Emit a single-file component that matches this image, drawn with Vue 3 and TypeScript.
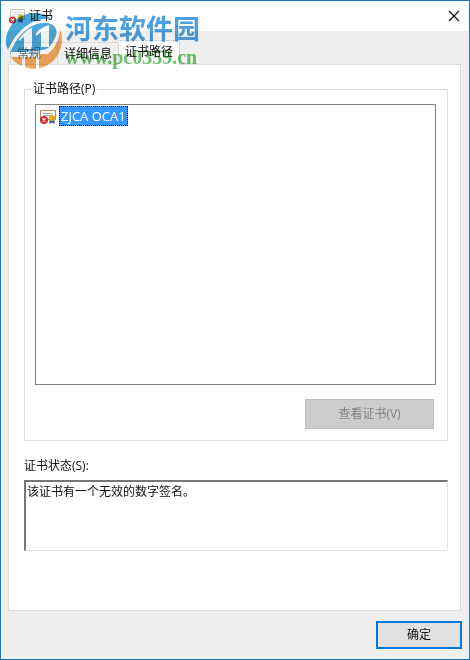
<script setup lang="ts">
import { ref } from 'vue'

const tabs: string[] = ['常规', '详细信息', '证书路径']
const active = ref(2)
const status = ref('该证书有一个无效的数字签名。')
</script>

<template>
  <main class="window">
    <header class="titlebar">
      <svg class="cert" viewBox="0 0 16 16" aria-hidden="true">
        <path d="M1.500 1.500h14v10h-14z" fill="#f7f5ee" stroke="#c9c5ba" />
        <path d="M4 4.500h9M4 6.500h9" stroke="#dcdcdc" />
        <path d="M9.500 10v5l2-1.500 2 1.500v-5" fill="#3c5a78" />
        <circle cx="11.500" cy="9" r="2.500" fill="#d9a520" />
        <circle cx="3.500" cy="12" r="3.500" fill="#c72b36" />
        <path d="m2 10.500 3 3m0-3-3 3" stroke="#fff" stroke-width="1.200" />
      </svg>
      <h1>证书</h1>
      <button class="close" type="button" aria-label="关闭">
        <svg viewBox="0 0 12 12"><path d="m1 1 10 10M11 1 1 11" stroke="#111" stroke-width="1.200" /></svg>
      </button>
    </header>

    <nav class="tabs" role="tablist">
      <button
        v-for="(tab, i) in tabs"
        :key="tab"
        type="button"
        role="tab"
        class="tab"
        :class="{ selected: active === i }"
        :aria-selected="active === i"
        @click="active = i"
      >{{ tab }}</button>
    </nav>

    <section class="panel">
      <fieldset class="group">
        <legend>证书路径(P)</legend>
        <ul class="tree">
          <li>
            <svg class="cert" viewBox="0 0 16 16" aria-hidden="true">
              <path d="M.5 2.500h15v9H.5z" fill="#fffdf2" stroke="#b08b62" />
              <path d="M3 5.500h10M3 7.500h10" stroke="#b4b4b4" />
              <path d="M9.500 11v5l2.500-1.500 2.500 1.500v-5" fill="#315d94" />
              <circle cx="12" cy="10" r="3" fill="#e9a817" />
              <circle cx="4" cy="12" r="4" fill="#c72b36" />
              <path d="m2.500 10.500 3 3m0-3-3 3" stroke="#fff" stroke-width="1.200" />
            </svg>
            <button class="node" type="button">ZJCA OCA1</button>
          </li>
        </ul>
        <button class="view" type="button" disabled>查看证书(V)</button>
      </fieldset>
      <label class="label" for="status">证书状态(S):</label>
      <textarea id="status" v-model="status" class="status" readonly></textarea>
    </section>

    <footer class="actions">
      <button class="ok" type="button">确定</button>
    </footer>

    <div class="watermark">
      <svg class="logo" viewBox="0 0 58 58" aria-hidden="true">
        <path d="M1 34C0 15 14 2 30 2c7 0 12 2 16 6C29 6 12 18 3 39z" fill="#4aa8dc" />
        <path d="M5 43C11 25 26 11 40 12c10 0 14 7 10 15-4 9-11 15-20 16H18c-5-1-9 0-13 0z" fill="#4aa8dc" />
        <path d="M55 18c6 17-3 36-21 39V43h9c7-6 12-15 12-25z" fill="#f4a95a" />
        <path d="M6 46h11v9c-5-2-9-5-11-9zM20 46h11v12c-4 0-8-1-11-2z" fill="#f4a95a" />
        <path d="M14 28c4-5 7-9 13-11v21h-8V26l-5 4zM31 22c4-4 7-6 13-8v22h-8V21l-5 4z" fill="#fff" />
        <path d="M6 42h10c9-2 18 1 28-4" fill="none" stroke="#fff" stroke-width="2" />
      </svg>
      <div class="brand">河东软件园</div>
      <div class="site">www.pc0359.cn</div>
    </div>
  </main>
</template>

<style>
body {
  margin: 0;
}
</style>

<style scoped>
.window {
  position: relative;
  box-sizing: border-box;
  min-height: 100vh;
  display: flex;
  flex-direction: column;
  border: 1px solid #1e74b8;
  background: #efefef;
  color: #111;
  font: 12px/18px "Open Sans", "Noto Sans CJK SC", sans-serif;
}
button,
textarea {
  box-sizing: border-box;
  margin: 0;
  padding: 0;
  border-radius: 0;
  font: inherit;
  color: inherit;
}
.titlebar {
  display: flex;
  align-items: center;
  gap: 4px;
  height: 30px;
  padding: 0 7px 0 8px;
  background: #fff;
}
h1 {
  flex: 1;
  margin: 0;
  font: inherit;
}
.cert {
  width: 16px;
  height: 16px;
}
.close {
  display: grid;
  place-items: center;
  width: 16px;
  height: 16px;
  border: 0;
  background: none;
}
.close svg {
  width: 12px;
  height: 12px;
}
.tabs {
  display: flex;
  align-items: flex-end;
  height: 33px;
  padding: 0 9px;
}
.tab {
  height: 22px;
  padding: 0 6px;
  border: 1px solid #d9d9d9;
  border-bottom: 0;
  background: #f0f0f0;
}
.tab + .tab {
  border-left: 0;
}
.tab:first-child {
  padding: 0 16px 0 6px;
  color: #777;
}
.tab.selected {
  height: 25px;
  margin-bottom: -1px;
  padding-bottom: 2px;
  background: #fff;
  z-index: 1;
}
.panel {
  flex: 1;
  display: flex;
  flex-direction: column;
  margin: 0 8px 0 7px;
  padding: 15px 12px 59px 15px;
  border: 1px solid #dcdcdc;
  background: #fff;
}
.group {
  display: flex;
  flex-direction: column;
  min-width: 0;
  margin: 0;
  padding: 6px 11px 11px 10px;
  border: 1px solid #dcdcdc;
}
legend {
  margin-left: -4px;
  padding: 0 2px;
}
.tree {
  min-height: 277px;
  margin: 0 0 14px;
  padding: 1px 4px;
  border: 1px solid #828282;
  list-style: none;
}
.tree li {
  display: flex;
  align-items: center;
  gap: 3px;
}
.node {
  height: 20px;
  padding: 0 1px;
  border: 1px dotted #111;
  background: #3399ff;
  color: #fff;
  font-size: 13px;
}
.view {
  align-self: flex-end;
  width: 129px;
  height: 30px;
  margin-right: 2px;
  border: 1px solid #bfbfbf;
  background: #ccc;
  color: #838383;
}
.label {
  margin: 16px 0 5px;
}
.status {
  display: block;
  width: 100%;
  height: 71px;
  padding: 1px;
  border: 1px solid #e3e3e3;
  border-top: 2px solid #777;
  border-left: 2px solid #777;
  outline: 0;
  background: #fff;
  resize: none;
}
.actions {
  display: flex;
  justify-content: flex-end;
  padding: 10px 7px;
}
.ok {
  width: 86px;
  height: 28px;
  border: 2px solid #0078d7;
  background: #e1e1e1;
}
.watermark {
  position: absolute;
  top: 10px;
  left: 4px;
  z-index: 2;
  display: grid;
  grid-template: 32px 26px / 58px auto;
  column-gap: 2px;
  pointer-events: none;
  mix-blend-mode: multiply;
}
.logo {
  grid-row: 1 / 3;
  width: 58px;
  height: 58px;
}
.brand {
  color: #4d9fe0;
  font: bold 27px/34px "Noto Sans CJK SC", sans-serif;
}
.site {
  color: #6cc06c;
  font: bold 20px/28px "Liberation Serif", serif;
}
</style>
